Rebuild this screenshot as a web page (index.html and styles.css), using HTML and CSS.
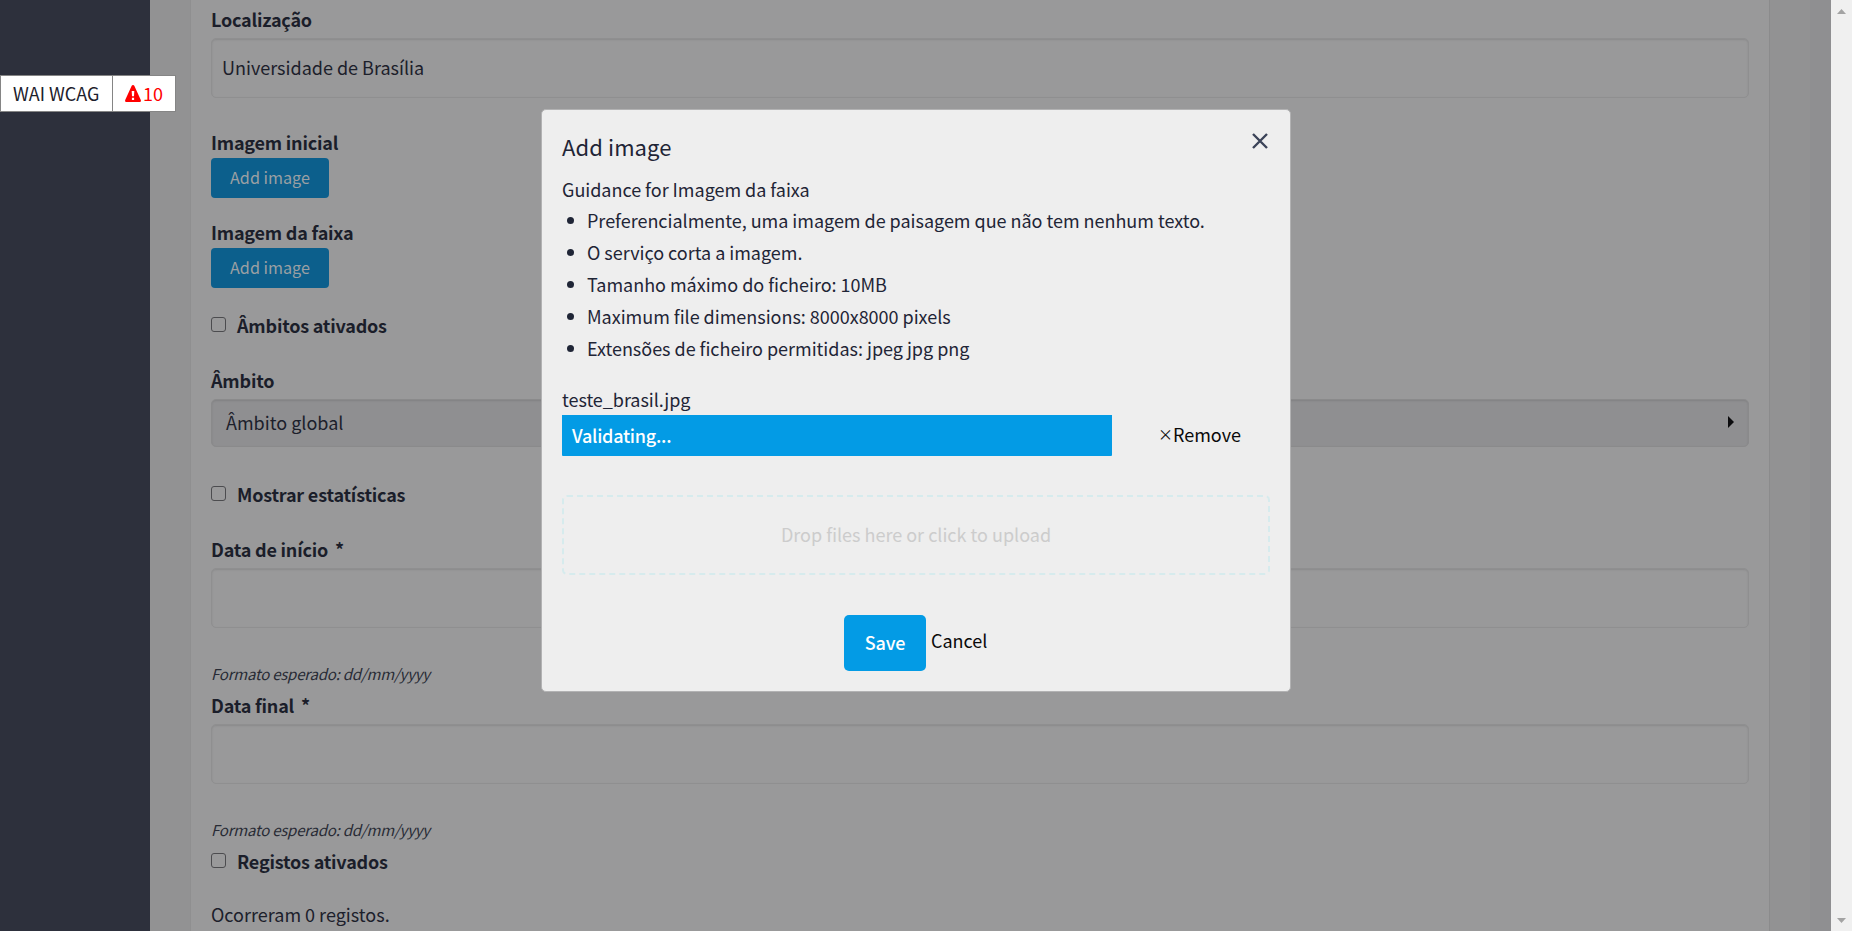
FILE: index.html
```html
<!DOCTYPE html>
<html lang="pt">
<head>
<meta charset="utf-8">
<title>Add image</title>
<link rel="stylesheet" href="styles.css">
</head>
<body>
<div class="layout">
  <nav class="sidebar"></nav>
  <main class="main">
    <form class="card">
      <div class="label">Localização</div>
      <div class="input"><span>Universidade de Brasília</span></div>
      <div class="label gap-29">Imagem inicial</div>
      <div class="add">Add image</div>
      <div class="label gap-19">Imagem da faixa</div>
      <div class="add">Add image</div>
      <div class="check gap-22"><i class="box"></i><span class="label">Âmbitos ativados</span></div>
      <div class="label gap-25">Âmbito</div>
      <div class="select"><span>Âmbito global</span><svg width="6" height="12" viewBox="0 0 6 12"><path d="M0 0L6 6L0 12Z" fill="#0c0c0e"/></svg></div>
      <div class="check gap-32"><i class="box"></i><span class="label">Mostrar estatísticas</span></div>
      <div class="label gap-25">Data de início <span class="star">*</span></div>
      <div class="input"></div>
      <div class="help">Formato esperado: dd/mm/yyyy</div>
      <div class="label gap-1">Data final <span class="star">*</span></div>
      <div class="input"></div>
      <div class="help">Formato esperado: dd/mm/yyyy</div>
      <div class="check gap-1"><i class="box"></i><span class="label">Registos ativados</span></div>
      <div class="note">Ocorreram 0 registos.</div>
    </form>
  </main>
  <div class="edge"></div>
  <div class="scroll">
    <svg width="9" height="5" viewBox="0 0 9 5"><path d="M0 5L4.5 0L9 5Z" fill="#a3a3a3"/></svg>
    <svg width="9" height="5" viewBox="0 0 9 5"><path d="M0 0L4.5 5L9 0Z" fill="#a3a3a3"/></svg>
  </div>
</div>

<div class="wcag">
  <span class="wcag-name">WAI WCAG</span>
  <span class="wcag-count"><svg width="16" height="17" viewBox="0 0 16 17"><path fill="#f00" fill-rule="evenodd" d="M8 0Q8.900 0 9.300 .8L15.800 15Q16.300 17 14.800 17H1.200Q-.3 17 .2 15L6.700 .8Q7.100 0 8 0ZM6.700 6L7 11.300H9L9.300 6ZM6.900 12.700V14.900H9.100V12.700Z"/></svg><span>10</span></span>
</div>

<section class="modal">
  <svg class="close" width="16" height="16" viewBox="0 0 16 16"><path d="M1 1L15 15M15 1L1 15" stroke="#3b4358" stroke-width="2.400"/></svg>
  <h2 class="title">Add image</h2>
  <div class="guide">Guidance for Imagem da faixa</div>
  <ul class="list">
    <li>Preferencialmente, uma imagem de paisagem que não tem nenhum texto.</li>
    <li>O serviço corta a imagem.</li>
    <li>Tamanho máximo do ficheiro: 10MB</li>
    <li>Maximum file dimensions: 8000x8000 pixels</li>
    <li>Extensões de ficheiro permitidas: jpeg jpg png</li>
  </ul>
  <div class="file">teste_brasil.jpg</div>
  <div class="upload">
    <div class="bar">Validating...</div>
    <div class="remove"><span class="times">×</span><span>Remove</span></div>
  </div>
  <div class="drop">
    <svg class="dash" width="708" height="80"><rect x="1" y="1" width="706" height="78" rx="4" fill="none" stroke="#d6ebed" stroke-width="2" stroke-dasharray="6 4"/></svg>
    <span>Drop files here or click to upload</span>
  </div>
  <div class="actions"><div class="save">Save</div><div class="cancel">Cancel</div></div>
</section>
</body>
</html>
```

FILE: styles.css
```css
* { box-sizing: border-box; }
body {
  margin: 0;
  height: 931px;
  overflow: hidden;
  font-family: "Noto Sans CJK SC", "Noto Sans", sans-serif;
  font-size: 18px;
  line-height: 30px;
  color: #1c202b;
  white-space: nowrap;
}
.layout { display: flex; height: 931px; background: #929293; }
.sidebar { width: 150px; background: #2d303c; }
.main { width: 1660px; padding: 0 40px 0 40px; }
.card {
  height: 931px;
  overflow: hidden;
  padding: 4px 20px 0;
  background: #99999a;
  border-left: 1px solid #8f8f90;
  border-right: 1px solid #8b8b8c;
}
.edge { width: 21px; background: #8f8f91; }
.scroll {
  width: 21px;
  background: #f0f0f0;
  display: flex;
  flex-direction: column;
  justify-content: space-between;
  align-items: center;
  padding: 9px 0 8px;
}
.label { font-weight: 700; letter-spacing: -.2px; color: #1b1e2a; }
.gap-1 { margin-top: 1px; }
.gap-19 { margin-top: 19px; }
.gap-22 { margin-top: 22px; }
.gap-25 { margin-top: 25px; }
.gap-29 { margin-top: 29px; }
.gap-32 { margin-top: 32px; }
.input {
  height: 60px;
  margin-top: 4px;
  padding: 13px 10px;
  border: 1px solid #8f8f90;
  border-radius: 5px;
  box-shadow: inset 0 1px 2px rgba(10, 10, 10, .1);
}
.add {
  width: 118px;
  height: 40px;
  margin-top: 1px;
  line-height: 39px;
  text-align: center;
  font-size: 16.2px;
  background: #0c5f8c;
  color: #9a9fa3;
  border-radius: 4px;
}
.check { display: flex; height: 30px; }
.box {
  width: 15px;
  height: 15px;
  margin: 7px 11px 0 0;
  border: 1px solid #4c4c4f;
  border-radius: 3px;
}
.select {
  height: 48px;
  margin-top: 4px;
  padding: 0 14px 2px;
  display: flex;
  align-items: center;
  justify-content: space-between;
  background: #8f8f91;
  border: 1px solid #8a8a8b;
  border-radius: 5px;
  box-shadow: inset 0 1px 2px rgba(10, 10, 10, .1);
}
.star { margin-left: 3px; }
.help {
  margin-top: 31px;
  font-size: 15px;
  letter-spacing: -.22px;
  font-style: italic;
  color: #282b35;
}
.note { margin-top: 23px; }

.wcag {
  position: absolute;
  left: 0;
  top: 75px;
  width: 176px;
  height: 37px;
  display: flex;
  background: #fff;
  border: 1px solid #858585;
  line-height: 34px;
}
.wcag-name { width: 112px; padding-left: 12px; border-right: 1px solid #858585; }
.wcag-count {
  display: flex;
  align-items: center;
  gap: 2px;
  height: 34px;
  padding-left: 12px;
  color: #f00;
}

.modal {
  position: absolute;
  left: 541px;
  top: 109px;
  width: 750px;
  height: 583px;
  padding: 18px 20px 0;
  background: #eee;
  border: 1px solid #b2b2b3;
  border-radius: 5px;
  color: #1f2536;
}
.close { position: absolute; right: 22px; top: 23px; }
.title { margin: 0; font-size: 22px; font-weight: 400; line-height: 36px; letter-spacing: .1px; }
.guide { margin-top: 10px; line-height: 30px; letter-spacing: -.02px; }
.list {
  margin: 0;
  padding: 0 0 0 25px;
  list-style: none;
  line-height: 32px;
  letter-spacing: -.02px;
}
.list li { display: flex; align-items: center; }
.list li::before {
  content: "";
  width: 7px;
  height: 7px;
  margin-left: -20px;
  margin-right: 13px;
  border-radius: 50%;
  background: #1f2536;
}
.file { margin-top: 20px; line-height: 30px; letter-spacing: -.04px; }
.upload { display: flex; margin-top: 1px; height: 41px; }
.bar {
  width: 550px;
  padding-left: 10px;
  background: #039be5;
  color: #fefefe;
  font-weight: 500;
  letter-spacing: -.25px;
  line-height: 41px;
  border-radius: 0 0 1px 1px;
}
.remove {
  display: flex;
  gap: 3px;
  margin-left: 46px;
  line-height: 39px;
  color: #0a0a0a;
}
.times { width: 12px; font-size: 15px; line-height: 37px; text-align: center; }
.drop {
  position: relative;
  height: 80px;
  margin-top: 39px;
  text-align: center;
  line-height: 79px;
  color: #ccc;
}
.dash { position: absolute; left: 0; top: 0; }
.actions { display: flex; margin: 40px 0 0 282px; gap: 5px; }
.save {
  width: 82px;
  height: 56px;
  text-align: center;
  line-height: 55px;
  background: #039be5;
  color: #fefefe;
  font-weight: 500;
  letter-spacing: -.2px;
  border-radius: 5px;
}
.cancel { line-height: 51px; color: #0a0a0a; }
```
